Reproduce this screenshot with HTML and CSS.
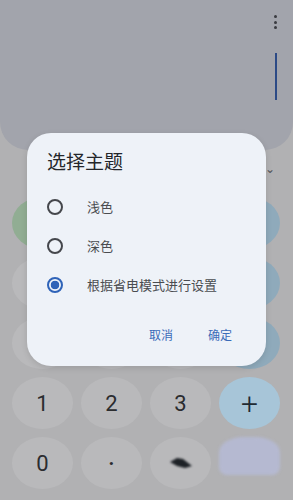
FILE: index.html
```html
<!DOCTYPE html>
<html lang="zh">
<head>
<meta charset="utf-8">
<link rel="stylesheet" href="styles.css">
</head>
<body>
<div class="screen">
  <div class="display">
    <div class="kebab"><span></span><span></span><span></span></div>
    <div class="cursor"></div>
  </div>
  <div class="chev-row"><span class="chev">⌄</span></div>
  <div class="keypad">
    <div class="key green"></div><div class="key"></div><div class="key"></div><div class="key op"></div>
    <div class="key"></div><div class="key"></div><div class="key"></div><div class="key op"></div>
    <div class="key"></div><div class="key"></div><div class="key"></div><div class="key op"></div>
    <div class="key">1</div><div class="key">2</div><div class="key">3</div><div class="key plus">+</div>
    <div class="key">0</div><div class="key dot">.</div>
    <div class="key"><svg class="bksp" width="24" height="14" viewBox="0 0 24 14"><path d="M1 6 L8 2 L14 3 L23 10 L16 12 L8 10 Z" fill="#1d2126"/></svg></div>
    <div class="key eq"></div>
  </div>

  <div class="dialog">
    <div class="title">选择主题</div>
    <div class="options">
      <div class="opt"><span class="radio"></span><span class="label">浅色</span></div>
      <div class="opt"><span class="radio"></span><span class="label">深色</span></div>
      <div class="opt"><span class="radio on"></span><span class="label">根据省电模式进行设置</span></div>
    </div>
    <div class="actions">
      <span class="btn">取消</span>
      <span class="btn">确定</span>
    </div>
  </div>
</div>
</body>
</html>
```

FILE: styles.css
```css
* { box-sizing: border-box; }
html, body { margin: 0; padding: 0; }
body {
  width: 293px;
  height: 500px;
  overflow: hidden;
  font-family: "Noto Sans CJK SC", "Noto Sans", Roboto, sans-serif;
}
.screen {
  position: relative;
  width: 293px;
  height: 500px;
  background: #b1b1b3;
}
.display {
  height: 150px;
  background: #a2a4ac;
  border-radius: 0 0 28px 28px;
  display: flex;
  flex-direction: column;
  align-items: flex-end;
  padding: 15px 16px 0 0;
}
.kebab {
  display: flex;
  flex-direction: column;
  gap: 2.5px;
  width: 3px;
}
.kebab span {
  width: 3px;
  height: 3px;
  border-radius: 50%;
  background: #3a3b40;
}
.cursor {
  margin-top: 24px;
  width: 2px;
  height: 47px;
  background: #2c4a86;
  margin-right: 0.5px;
}
.chev-row {
  height: 47px;
  display: flex;
  justify-content: flex-end;
  padding: 12px 18px 0 0;
}
.chev {
  font-size: 12px;
  line-height: 12px;
  color: #55565a;
}
.keypad {
  display: grid;
  grid-template-columns: repeat(4, 61px);
  grid-auto-rows: 52px;
  column-gap: 8px;
  row-gap: 8px;
  padding-left: 12px;
}
.key {
  border-radius: 50%;
  background: #b9b9bb;
  display: flex;
  align-items: center;
  justify-content: center;
  font-family: Roboto, "Noto Sans", sans-serif;
  font-size: 22px;
  color: #2b2c2f;
}
.key.dot { font-size: 20px; font-weight: 700; padding-bottom: 10px; }
.key.green { background: #91ad93; }
.key.op { background: #8faabb; }
.key.plus { background: #a7c5d8; font-size: 30px; font-weight: 300; color: #1f2a33; }
.key.eq { background: #b5b9d1; filter: blur(1.5px); border-radius: 40% 40% 8px 8px; height: 38px; }
.bksp { filter: blur(1px); }

.dialog {
  position: absolute;
  left: 27px;
  top: 133px;
  width: 239px;
  height: 233px;
  background: #eef2f8;
  border-radius: 24px;
  box-shadow: 0 2px 6px rgba(0,0,0,0.12);
  padding: 16px 0 0 20px;
  display: flex;
  flex-direction: column;
}
.title {
  font-size: 19px;
  line-height: 24px;
  color: #24262a;
}
.options {
  margin-top: 14px;
  display: flex;
  flex-direction: column;
}
.opt {
  height: 39px;
  display: flex;
  align-items: center;
  gap: 24px;
}
.radio {
  width: 16px;
  height: 16px;
  border-radius: 50%;
  border: 2px solid #45474c;
  flex: none;
}
.radio.on {
  border-color: #2f63b8;
  background: radial-gradient(circle, #2f63b8 0 4px, transparent 4.6px);
}
.label {
  font-size: 13px;
  line-height: 16px;
  color: #4a4c50;
}
.actions {
  margin-top: 23px;
  display: flex;
  justify-content: flex-end;
  gap: 35px;
  padding-right: 34px;
}
.btn {
  font-size: 12px;
  line-height: 16px;
  color: #3a6bb8;
}
```
